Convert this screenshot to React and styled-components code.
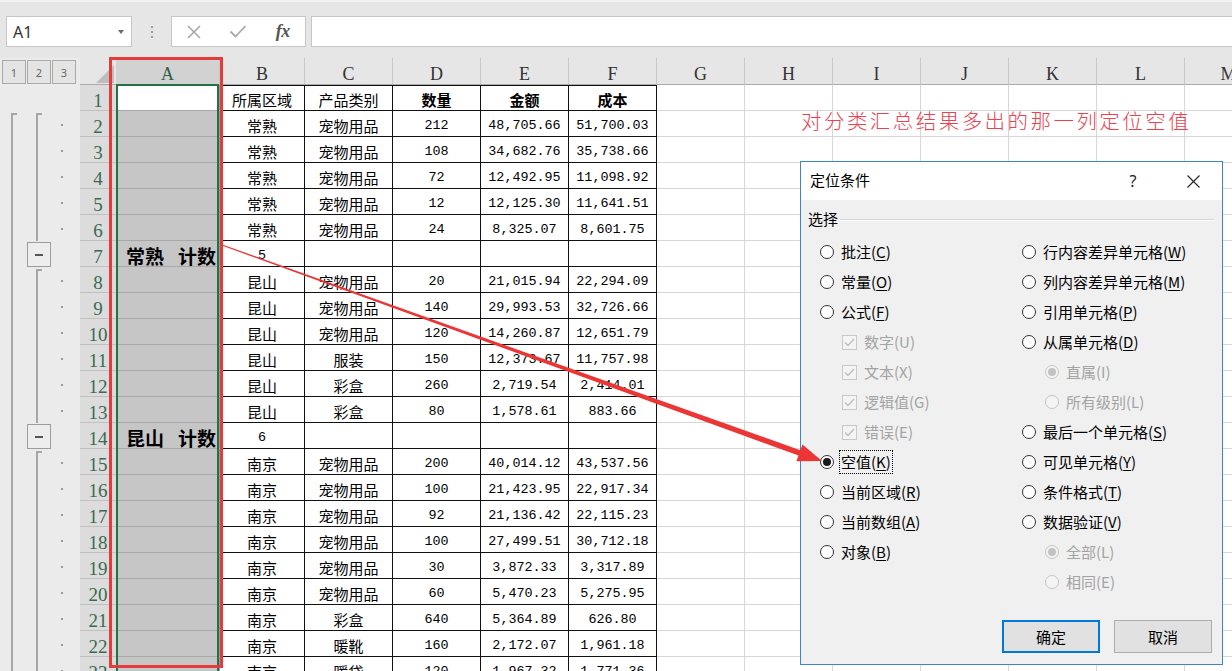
import React from "react";
import styled, { createGlobalStyle, css } from "styled-components";

const CJK = `"Noto Sans CJK SC", "Noto Sans", sans-serif`;
const MONO = `"Liberation Mono", "Noto Sans CJK SC", monospace`;
const SERIF = `"Liberation Serif", "Noto Sans CJK SC", serif`;

const GlobalStyle = createGlobalStyle`
  html, body { margin: 0; padding: 0; background: #ffffff; }
  body { overflow: hidden; font-family: ${CJK}; }
  *, *::before, *::after { box-sizing: border-box; }
`;

const Screen = styled.div`
  position: relative;
  width: 1232px;
  height: 671px;
  overflow: hidden;
  background: #ffffff;
`;

/* ---------- formula bar ---------- */
const FormulaBar = styled.div`
  height: 58px;
  background: #e6e6e6;
  border-top: 2px solid #f3f3f3;
  display: flex;
  align-items: flex-start;
  padding: 14px 0 0 6px;
`;
const NameBox = styled.div`
  width: 126px;
  height: 31px;
  flex-shrink: 0;
  background: #fff;
  border: 1px solid #c6c6c6;
  display: flex;
  align-items: center;
  justify-content: space-between;
  padding: 0 7px 0 6px;
  font: 16px "Noto Sans", sans-serif;
  color: #333;
`;
const Caret = styled.span`
  width: 0;
  height: 0;
  border-left: 3.5px solid transparent;
  border-right: 3.5px solid transparent;
  border-top: 4px solid #6b6b6b;
`;
const Grip = styled.div`
  width: 39px;
  height: 31px;
  flex-shrink: 0;
  display: flex;
  flex-direction: column;
  align-items: center;
  justify-content: center;
  gap: 3px;
`;
const GripDot = styled.span`
  width: 2px;
  height: 2px;
  background: #9d9d9d;
`;
const FxBox = styled.div`
  width: 135px;
  height: 31px;
  flex-shrink: 0;
  background: #fff;
  border: 1px solid #c6c6c6;
  display: flex;
`;
const FxSlot = styled.div`
  flex: 1;
  display: flex;
  align-items: center;
  justify-content: center;
`;
const FxText = styled.span`
  font: italic 700 18px ${SERIF};
  color: #555;
  letter-spacing: -0.5px;
`;
const FormulaInput = styled.div`
  flex: 1;
  height: 31px;
  margin-left: 5px;
  background: #fff;
  border: 1px solid #c6c6c6;
  border-right: none;
`;

/* ---------- sheet ---------- */
const Sheet = styled.div`
  display: flex;
`;
const OutlinePane = styled.div`
  width: 80px;
  flex-shrink: 0;
  background: #ebebeb;
`;
const LevelBar = styled.div`
  height: 27px;
  display: flex;
  gap: 1px;
  padding: 2px 0 0 2px;
`;
const LevelBtn = styled.div`
  width: 24px;
  height: 24px;
  border: 1px solid #a9a9a9;
  background: #e4e4e4;
  display: flex;
  align-items: center;
  justify-content: center;
  font: 11px "Noto Sans", sans-serif;
  color: #666;
`;
const OutlineRow = styled.div`
  height: 26px;
  display: flex;
`;
const Lane = styled.div`
  position: relative;
  width: 25px;
  height: 100%;
  ${(p) =>
    p.$line &&
    css`
      &::before {
        content: "";
        position: absolute;
        left: 11px;
        top: ${p.$start ? 2 : 0}px;
        bottom: 0;
        width: 2px;
        background: #a6a6a6;
      }
    `}
  ${(p) =>
    p.$start &&
    css`
      &::after {
        content: "";
        position: absolute;
        left: 11px;
        top: 2px;
        width: 6px;
        height: 2px;
        background: #a6a6a6;
      }
    `}
`;
const MinusBtn = styled.div`
  width: 24px;
  height: 25px;
  margin: 1px 0 0 2px;
  border: 1px solid #9c9c9c;
  background: #ededed;
  display: flex;
  align-items: center;
  justify-content: center;
  &::after {
    content: "";
    width: 8px;
    height: 2px;
    background: #555;
  }
`;
const Dot = styled.span`
  position: absolute;
  left: 11px;
  top: 13px;
  width: 2px;
  height: 2px;
  background: #9a9a9a;
`;

const GridPane = styled.div`
  flex: 1;
  min-width: 0;
  overflow: hidden;
`;
const HeaderRow = styled.div`
  display: flex;
  height: 27px;
`;
const Corner = styled.div`
  position: relative;
  width: 36px;
  flex-shrink: 0;
  background: #e6e6e6;
  border-bottom: 1px solid #ababab;
  &::after {
    content: "";
    position: absolute;
    right: 2px;
    bottom: 1px;
    border-style: solid;
    border-width: 0 0 18px 18px;
    border-color: transparent transparent #bdbdbd transparent;
  }
`;
const ColHead = styled.div`
  width: ${(p) => p.$w}px;
  flex-shrink: 0;
  height: 27px;
  background: ${(p) => (p.$sel ? "#d2d2d2" : "#e6e6e6")};
  border-right: 1px solid #c8c8c8;
  border-bottom: 1px solid #ababab;
  font: 18px ${SERIF};
  color: ${(p) => (p.$sel ? "#2f5f45" : "#333")};
  text-align: center;
  line-height: 20px;
  padding-top: 6px;
`;
const DataRow = styled.div`
  display: flex;
  height: 26px;
`;
const RowHead = styled.div`
  width: 36px;
  flex-shrink: 0;
  background: #dcdcdc;
  border-bottom: 1px solid #c0c0c0;
  font: 19px ${SERIF};
  color: #3a6b52;
  text-align: center;
  line-height: 20px;
  padding-top: 6px;
`;

const variants = {
  sel: css`
    background: #c6c6c6;
    border-right: 1px solid #9a9a9a;
    border-bottom: 1px solid #a8a8a8;
  `,
  active: css`
    background: #ffffff;
    border-right: 1px solid #9a9a9a;
    border-bottom: 1px solid #a8a8a8;
  `,
  box: css`
    background: #ffffff;
    border-right: 1px solid #111;
    border-bottom: 1px solid #111;
  `,
  plain: css`
    background: #ffffff;
    border-right: 1px solid #d6d6d6;
    border-bottom: 1px solid #d6d6d6;
  `,
};

const Cell = styled.div`
  width: ${(p) => p.$w}px;
  flex-shrink: 0;
  height: 26px;
  ${(p) => variants[p.$variant]}
  ${(p) => p.$top && css`border-top: 1px solid #111;`}
  display: flex;
  justify-content: ${(p) => (p.$big ? "flex-end" : "center")};
  padding: ${(p) => (p.$top ? 4 : 5)}px ${(p) => (p.$big ? 3 : 0)}px 0 0;
  line-height: 20px;
  white-space: nowrap;
  color: #000;
  font-family: ${(p) => (p.$mono ? MONO : CJK)};
  font-size: ${(p) => (p.$big ? 19 : p.$mono ? 13.4 : 15)}px;
  font-weight: ${(p) => (p.$bold ? 700 : 400)};
`;
const Gap = styled.span`
  display: inline-block;
  width: 14px;
`;

/* ---------- overlays ---------- */
const SelectionFrame = styled.div`
  position: absolute;
  left: 116px;
  top: 84px;
  width: 103px;
  height: 620px;
  border: 2px solid #217346;
  pointer-events: none;
`;
const AnnotationBox = styled.div`
  position: absolute;
  left: 109px;
  top: 57px;
  width: 114px;
  height: 611px;
  border: 3px solid #e63b3b;
  pointer-events: none;
`;
const Note = styled.div`
  position: absolute;
  left: 801px;
  top: 110px;
  font: 300 20.5px ${CJK};
  line-height: 21px;
  letter-spacing: 2.45px;
  color: #e8434f;
  white-space: nowrap;
`;
const ArrowLayer = styled.svg`
  position: absolute;
  left: 0;
  top: 0;
  pointer-events: none;
`;

/* ---------- dialog ---------- */
const Dialog = styled.div`
  position: absolute;
  left: 800px;
  top: 161px;
  width: 423px;
  height: 504px;
  background: #f0f0f0;
  border: 1px solid #3c85c6;
  display: flex;
  flex-direction: column;
  font-family: ${CJK};
`;
const TitleBar = styled.div`
  height: 38px;
  background: #ffffff;
  display: flex;
  align-items: center;
  padding-left: 9px;
  padding-right: 6px;
  font-size: 15px;
  color: #000;
`;
const TitleText = styled.div`
  flex: 1;
  margin-top: -3px;
`;
const TitleBtn = styled.div`
  width: 46px;
  height: 38px;
  display: flex;
  align-items: center;
  justify-content: center;
  margin-right: ${(p) => p.$gap || 0}px;
  font: 16px "Noto Sans", sans-serif;
  color: #222;
`;
const GroupHeader = styled.div`
  height: 37px;
  display: flex;
  align-items: center;
  gap: 2px;
  padding: 0 7px;
  font-size: 15px;
  color: #000;
`;
const GroupRule = styled.div`
  flex: 1;
  height: 2px;
  margin-top: 2px;
  border-top: 1px solid #d5d5d5;
  border-bottom: 1px solid #ffffff;
`;
const OptionsGrid = styled.div`
  display: grid;
  grid-template-columns: 202px 1fr;
  padding-left: 19px;
`;
const OptionCol = styled.div`
  display: flex;
  flex-direction: column;
`;
const OptionRow = styled.div`
  height: 30px;
  display: flex;
  align-items: center;
  gap: 6px;
  padding-left: ${(p) => p.$indent}px;
`;
const Radio = styled.span`
  width: 14px;
  height: 14px;
  flex-shrink: 0;
  border-radius: 50%;
  border: 1px solid ${(p) => (p.$disabled ? "#c4c4c4" : "#333")};
  background: ${(p) => (p.$disabled ? "#f4f4f4" : "#fff")};
  display: flex;
  align-items: center;
  justify-content: center;
  ${(p) =>
    p.$checked &&
    css`
      &::after {
        content: "";
        width: 8px;
        height: 8px;
        border-radius: 50%;
        background: ${p.$disabled ? "#c2c2c2" : "#1a1a1a"};
      }
    `}
`;
const CheckBox = styled.span`
  width: 15px;
  height: 15px;
  flex-shrink: 0;
  border: 1px solid #c8c8c8;
  background: #f4f4f4;
  display: flex;
  align-items: center;
  justify-content: center;
`;
const OptionLabel = styled.span`
  font-size: 15px;
  line-height: 20px;
  padding: 1px 1px;
  color: ${(p) => (p.$disabled ? "#a3a3a3" : "#000")};
  white-space: nowrap;
  ${(p) =>
    p.$focused &&
    css`
      outline: 1px dotted #000;
    `}
  & u {
    text-underline-offset: 2px;
  }
`;
const ButtonRow = styled.div`
  display: flex;
  justify-content: flex-end;
  gap: 14px;
  padding-right: 10px;
  margin-top: 23px;
`;
const DlgButton = styled.div`
  width: 98px;
  height: 33px;
  background: #e1e1e1;
  border: ${(p) => (p.$primary ? "2px solid #0078d7" : "1px solid #adadad")};
  display: flex;
  align-items: center;
  justify-content: center;
  font-size: 15px;
  color: #000;
`;

/* ---------- data ---------- */
const COLS = [
  ["A", 104], ["B", 85], ["C", 88], ["D", 88], ["E", 88], ["F", 88], ["G", 88],
  ["H", 88], ["I", 88], ["J", 88], ["K", 88], ["L", 88], ["M", 88],
];

const ROWS = [
  ["", "所属区域", "产品类别", "数量", "金额", "成本"],
  ["", "常熟", "宠物用品", "212", "48,705.66", "51,700.03"],
  ["", "常熟", "宠物用品", "108", "34,682.76", "35,738.66"],
  ["", "常熟", "宠物用品", "72", "12,492.95", "11,098.92"],
  ["", "常熟", "宠物用品", "12", "12,125.30", "11,641.51"],
  ["", "常熟", "宠物用品", "24", "8,325.07", "8,601.75"],
  [["常熟", "计数"], "5", "", "", "", ""],
  ["", "昆山", "宠物用品", "20", "21,015.94", "22,294.09"],
  ["", "昆山", "宠物用品", "140", "29,993.53", "32,726.66"],
  ["", "昆山", "宠物用品", "120", "14,260.87", "12,651.79"],
  ["", "昆山", "服装", "150", "12,373.67", "11,757.98"],
  ["", "昆山", "彩盒", "260", "2,719.54", "2,414.01"],
  ["", "昆山", "彩盒", "80", "1,578.61", "883.66"],
  [["昆山", "计数"], "6", "", "", "", ""],
  ["", "南京", "宠物用品", "200", "40,014.12", "43,537.56"],
  ["", "南京", "宠物用品", "100", "21,423.95", "22,917.34"],
  ["", "南京", "宠物用品", "92", "21,136.42", "22,115.23"],
  ["", "南京", "宠物用品", "100", "27,499.51", "30,712.18"],
  ["", "南京", "宠物用品", "30", "3,872.33", "3,317.89"],
  ["", "南京", "宠物用品", "60", "5,470.23", "5,275.95"],
  ["", "南京", "彩盒", "640", "5,364.89", "626.80"],
  ["", "南京", "暖靴", "160", "2,172.07", "1,961.18"],
  ["", "南京", "暖袋", "120", "1,967.32", "1,771.36"],
];

const LEFT_OPTS = [
  { label: "批注", hot: "C" },
  { label: "常量", hot: "O" },
  { label: "公式", hot: "F" },
  { label: "数字", hot: "U", check: true, disabled: true, indent: 22 },
  { label: "文本", hot: "X", check: true, disabled: true, indent: 22 },
  { label: "逻辑值", hot: "G", check: true, disabled: true, indent: 22 },
  { label: "错误", hot: "E", check: true, disabled: true, indent: 22 },
  { label: "空值", hot: "K", checked: true, focused: true },
  { label: "当前区域", hot: "R" },
  { label: "当前数组", hot: "A" },
  { label: "对象", hot: "B" },
];
const RIGHT_OPTS = [
  { label: "行内容差异单元格", hot: "W" },
  { label: "列内容差异单元格", hot: "M" },
  { label: "引用单元格", hot: "P" },
  { label: "从属单元格", hot: "D" },
  { label: "直属", hot: "I", disabled: true, checked: true, indent: 23 },
  { label: "所有级别", hot: "L", disabled: true, indent: 23 },
  { label: "最后一个单元格", hot: "S" },
  { label: "可见单元格", hot: "Y" },
  { label: "条件格式", hot: "T" },
  { label: "数据验证", hot: "V" },
  { label: "全部", hot: "L", disabled: true, checked: true, indent: 23 },
  { label: "相同", hot: "E", disabled: true, indent: 23 },
];

const isNum = (s) => typeof s === "string" && /^[\d,.]+$/.test(s);

function outlineFor(r) {
  const l1 = r >= 2 ? { line: true, start: r === 2 } : {};
  let l2 = {};
  if (r === 7 || r === 14) l2 = { button: true };
  else if (r >= 2) l2 = { line: true, start: r === 2 || r === 8 || r === 15 };
  const dot = r >= 2 && r !== 7 && r !== 14;
  return { l1, l2, dot };
}

function Option({ o }) {
  return (
    <OptionRow $indent={o.indent || 0}>
      {o.check ? (
        <CheckBox>
          <svg width="11" height="9" viewBox="0 0 11 9">
            <polyline points="1,4.5 4,7.5 10,1" fill="none" stroke="#bdbdbd" strokeWidth="1.3" />
          </svg>
        </CheckBox>
      ) : (
        <Radio $disabled={o.disabled} $checked={o.checked} />
      )}
      <OptionLabel $disabled={o.disabled} $focused={o.focused}>
        {o.label}({o.disabled ? o.hot : <u>{o.hot}</u>})
      </OptionLabel>
    </OptionRow>
  );
}

// arrow geometry
const S = [222, 245];
const T = [822, 461];
const len = Math.hypot(T[0] - S[0], T[1] - S[1]);
const u = [(T[0] - S[0]) / len, (T[1] - S[1]) / len];
const n = [-u[1], u[0]];
const B = [T[0] - 24 * u[0], T[1] - 24 * u[1]];
const pt = (p, k) => `${(p[0] + k * n[0]).toFixed(2)},${(p[1] + k * n[1]).toFixed(2)}`;
const ARROW = [
  pt(S, -0.6),
  pt(B, -2.8),
  pt(B, -9),
  `${T[0]},${T[1]}`,
  pt(B, 9),
  pt(B, 2.8),
  pt(S, 0.6),
].join(" ");

export default function App() {
  return (
    <Screen>
      <GlobalStyle />
      <FormulaBar>
        <NameBox>
          <span>A1</span>
          <Caret />
        </NameBox>
        <Grip>
          <GripDot />
          <GripDot />
          <GripDot />
        </Grip>
        <FxBox>
          <FxSlot>
            <svg width="14" height="14" viewBox="0 0 14 14">
              <path d="M1 1 L13 13 M13 1 L1 13" stroke="#a8a8a8" strokeWidth="1.6" />
            </svg>
          </FxSlot>
          <FxSlot>
            <svg width="18" height="13" viewBox="0 0 18 13">
              <polyline points="1.5,6.5 6.5,11.5 16.5,1" fill="none" stroke="#a8a8a8" strokeWidth="1.8" />
            </svg>
          </FxSlot>
          <FxSlot>
            <FxText>fx</FxText>
          </FxSlot>
        </FxBox>
        <FormulaInput />
      </FormulaBar>

      <Sheet>
        <OutlinePane>
          <LevelBar>
            <LevelBtn>1</LevelBtn>
            <LevelBtn>2</LevelBtn>
            <LevelBtn>3</LevelBtn>
          </LevelBar>
          {ROWS.map((_, i) => {
            const o = outlineFor(i + 1);
            return (
              <OutlineRow key={i}>
                <Lane $line={o.l1.line} $start={o.l1.start} />
                <Lane $line={o.l2.line} $start={o.l2.start}>
                  {o.l2.button && <MinusBtn />}
                </Lane>
                <Lane>{o.dot && <Dot />}</Lane>
              </OutlineRow>
            );
          })}
        </OutlinePane>

        <GridPane>
          <HeaderRow>
            <Corner />
            {COLS.map(([k, w], ci) => (
              <ColHead key={k} $w={w} $sel={ci === 0}>
                {k}
              </ColHead>
            ))}
          </HeaderRow>
          {ROWS.map((row, ri) => (
            <DataRow key={ri}>
              <RowHead>{ri + 1}</RowHead>
              {COLS.map(([k, w], ci) => {
                const text = ci < 6 ? row[ci] : "";
                const big = Array.isArray(text);
                let variant = "plain";
                if (ci === 0) variant = ri === 0 ? "active" : "sel";
                else if (ci <= 5) variant = "box";
                return (
                  <Cell
                    key={k}
                    $w={w}
                    $variant={variant}
                    $top={ri === 0 && ci >= 1 && ci <= 5}
                    $mono={isNum(text)}
                    $bold={(ri === 0 && ci >= 3) || big}
                    $big={big}
                  >
                    {big ? (
                      <span>
                        {text[0]}
                        <Gap />
                        {text[1]}
                      </span>
                    ) : (
                      text
                    )}
                  </Cell>
                );
              })}
            </DataRow>
          ))}
        </GridPane>
      </Sheet>

      <SelectionFrame />
      <AnnotationBox />
      <Note>对分类汇总结果多出的那一列定位空值</Note>

      <Dialog>
        <TitleBar>
          <TitleText>定位条件</TitleText>
          <TitleBtn $gap={14}>?</TitleBtn>
          <TitleBtn>
            <svg width="13" height="13" viewBox="0 0 13 13">
              <path d="M0.5 0.5 L12.5 12.5 M12.5 0.5 L0.5 12.5" stroke="#222" strokeWidth="1.1" />
            </svg>
          </TitleBtn>
        </TitleBar>
        <GroupHeader>
          <span>选择</span>
          <GroupRule />
        </GroupHeader>
        <OptionsGrid>
          <OptionCol>
            {LEFT_OPTS.map((o) => (
              <Option key={o.label} o={o} />
            ))}
          </OptionCol>
          <OptionCol>
            {RIGHT_OPTS.map((o) => (
              <Option key={o.label} o={o} />
            ))}
          </OptionCol>
        </OptionsGrid>
        <ButtonRow>
          <DlgButton $primary>确定</DlgButton>
          <DlgButton>取消</DlgButton>
        </ButtonRow>
      </Dialog>

      <ArrowLayer width="1232" height="671" viewBox="0 0 1232 671">
        <polygon points={ARROW} fill="#ec3535" />
      </ArrowLayer>
    </Screen>
  );
}
